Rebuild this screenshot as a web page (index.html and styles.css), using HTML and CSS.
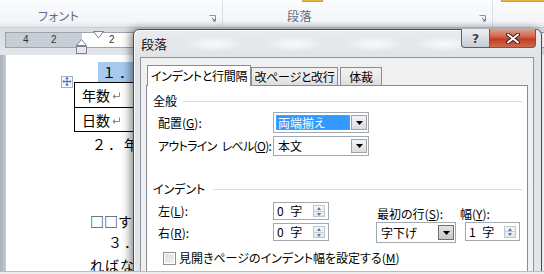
FILE: index.html
```html
<!DOCTYPE html>
<html lang="ja">
<head>
<meta charset="utf-8">
<title>段落</title>
<link rel="stylesheet" href="styles.css">
</head>
<body>
<div class="app">
  <div class="ribbon">
    <div class="group g1">
      <span class="glabel">フォント</span>
      <span class="launcher"><svg width="7" height="7" viewBox="0 0 7 7"><path d="M0.5 0.5H6.5V6.5" fill="none" stroke="#8c96a3"/><path d="M3 3L6 6M4 6H6V4" fill="none" stroke="#6c7683"/></svg></span>
    </div>
    <div class="group g2">
      <span class="goldbar gb1"></span>
      <span class="glabel">段落</span>
      <span class="launcher"><svg width="7" height="7" viewBox="0 0 7 7"><path d="M0.5 0.5H6.5V6.5" fill="none" stroke="#8c96a3"/><path d="M3 3L6 6M4 6H6V4" fill="none" stroke="#6c7683"/></svg></span>
    </div>
    <div class="group g3"><span class="goldbar gb2"></span></div>
  </div>

  <div class="rulerbar">
    <div class="ruler">
      <div class="rmargin"><span class="rnum n4">4</span><span class="rnum n2">2</span></div>
      <div class="rtext"><span class="rnum n2b">2</span></div>
      <svg class="firstind" width="11" height="8" viewBox="0 0 11 8"><path d="M0.5 0.5H10.5L5.5 7Z" fill="#fff" stroke="#7a8390"/></svg>
      <svg class="hangind" width="11" height="15" viewBox="0 0 11 15"><path d="M5.5 0.5L10.5 6.5H0.5Z" fill="#fff" stroke="#7a8390"/><rect x="0.5" y="7.5" width="10" height="7" fill="#e8e8e8" stroke="#7a8390"/></svg>
    </div>
  </div>

  <div class="docarea">
    <div class="vruler"></div>
    <div class="page">
      <div class="line l1">
        <span class="handle"><svg width="11" height="11" viewBox="0 0 11 11"><path d="M5.5 1V10M1 5.5H10" stroke="#3c6fc8" stroke-width="1.2"/><path d="M5.5 0.5L3.5 2.5H7.5ZM5.5 10.5L3.5 8.5H7.5ZM0.5 5.5L2.5 3.5V7.5ZM10.5 5.5L8.5 3.5V7.5Z" fill="#3c6fc8"/></svg></span>
        <span class="sel">１．</span>
      </div>
      <div class="tbl">
        <div class="trow"><span>年数</span><svg class="pm" width="9" height="8" viewBox="0 0 9 8"><path d="M7.5 0.5V4.5H1.5" fill="none" stroke="#888"/><path d="M0.5 4.5L3 2V7Z" fill="#888"/></svg></div>
        <div class="trow"><span>日数</span><svg class="pm" width="9" height="8" viewBox="0 0 9 8"><path d="M7.5 0.5V4.5H1.5" fill="none" stroke="#888"/><path d="M0.5 4.5L3 2V7Z" fill="#888"/></svg></div>
      </div>
      <div class="line l2">２．年</div>
      <div class="line l3">□□す</div>
      <div class="line l4">３．</div>
      <div class="line l5">ればな</div>
    </div>
  </div>

  <div class="dialog">
    <div class="titlebar">
      <span class="title">段落</span>
      <div class="capbtns">
        <span class="cap help">?</span>
        <span class="cap close"><svg width="14" height="11" viewBox="0 0 14 11"><path d="M2 1.5L12 9.5M12 1.5L2 9.5" stroke="#3a2020" stroke-width="4" stroke-linecap="round"/><path d="M2 1.5L12 9.5M12 1.5L2 9.5" stroke="#fff" stroke-width="2" stroke-linecap="round"/></svg></span>
      </div>
    </div>
    <div class="client">
      <div class="tabs">
        <span class="tab active">インデントと行間隔</span>
        <span class="tab t2">改ページと改行</span>
        <span class="tab t3">体裁</span>
      </div>
      <div class="panel">
        <div class="hdr h1"><span>全般</span><i></i></div>
        <div class="frow r1">
          <span class="lbl">配置(<u>G</u>):</span>
          <div class="combo c1"><span class="val hi">両端揃え</span><span class="ddbtn"><svg width="7" height="4" viewBox="0 0 7 4"><path d="M0 0H7L3.5 4Z" fill="#000"/></svg></span></div>
        </div>
        <div class="frow r2">
          <span class="lbl">アウトライン レベル(<u>O</u>):</span>
          <div class="combo c2"><span class="val">本文</span><span class="ddbtn"><svg width="7" height="4" viewBox="0 0 7 4"><path d="M0 0H7L3.5 4Z" fill="#000"/></svg></span></div>
        </div>
        <div class="hdr h2"><span>インデント</span><i></i></div>
        <div class="igrid">
          <span class="lbl ga">左(<u>L</u>):</span>
          <div class="spin sa"><span class="val">0 字</span><span class="spbtns"><b class="up"></b><b class="dn"></b></span></div>
          <span class="lbl gc">最初の行(<u>S</u>):</span>
          <span class="lbl gd">幅(<u>Y</u>):</span>
          <span class="lbl gb">右(<u>R</u>):</span>
          <div class="spin sb"><span class="val">0 字</span><span class="spbtns"><b class="up"></b><b class="dn"></b></span></div>
          <div class="combo c3"><span class="val">字下げ</span><span class="ddbtn dark"><svg width="7" height="4" viewBox="0 0 7 4"><path d="M0 0H7L3.5 4Z" fill="#000"/></svg></span></div>
          <div class="spin sd"><span class="val">1 字</span><span class="spbtns"><b class="up"></b><b class="dn"></b></span></div>
        </div>
        <div class="chk"><span class="box"></span><span>見開きページのインデント幅を設定する(<u>M</u>)</span></div>
        <div class="chk next"><span class="box"></span><span>1 行の文字数を指定時に右のインデント幅を自動調整する(<u>D</u>)</span></div>
      </div>
    </div>
  </div>

  <div class="hbar"></div>
</div>
</body>
</html>
```

FILE: styles.css
```css
* { box-sizing: border-box; }
html, body { margin: 0; padding: 0; }
body {
  width: 544px; height: 274px; overflow: hidden;
  font-family: "Noto Sans CJK JP", "Noto Sans", sans-serif;
  font-size: 12px; line-height: 1; color: #000; white-space: nowrap;
}
.app { position: relative; width: 544px; height: 274px; overflow: hidden; background: #fff; }

/* Ribbon */
.ribbon {
  height: 28px; display: flex;
  background: linear-gradient(#fbfcfd 0%, #f3f5f8 80%, #e3e7ec 100%);
  border-bottom: 1px solid #c9ced6;
}
.group { position: relative; height: 100%; border-right: 1px solid #dadfe6; display: flex; align-items: flex-end; }
.g1 { width: 223px; padding-left: 38px; }
.g2 { width: 270px; padding-left: 64px; }
.g3 { flex: 1; border-right: 0; }
.glabel { color: #5f6c80; font-size: 12px; font-feature-settings: "palt"; letter-spacing: 0.5px; margin-bottom: 5px; }
.launcher { position: absolute; right: 6px; bottom: 5px; width: 7px; height: 7px; display: flex; }
.goldbar { position: absolute; top: 0; height: 2px; background: #e3b543; border: 1px solid #c7a048; border-top: 0; }
.gb1 { left: 79px; width: 21px; }
.gb2 { left: 8px; width: 44px; }

/* Ruler */
.rulerbar {
  height: 27px; padding: 4px 0 0 5px;
  background: linear-gradient(#d9dde3, #e2e5ea);
}
.ruler {
  position: relative; height: 16px; width: 600px; display: flex;
  border: 1px solid #9ba3ae; border-right: 0;
}
.rmargin { width: 76px; background: #c8ced6; position: relative; }
.rtext { flex: 1; background: #fff; position: relative; }
.rnum { position: absolute; top: 2px; font-family: "Liberation Sans", sans-serif; font-size: 10px; color: #333; }
.n4 { left: 17px; }
.n2 { left: 45px; }
.n2b { left: 27px; }
.firstind { position: absolute; left: 87px; top: -2px; }
.hangind { position: absolute; left: 70px; top: 6px; }

/* Document */
.docarea { display: flex; height: 219px; }
.vruler { width: 6px; background: linear-gradient(to right, #a9b0b9, #c4c9d0); }
.page { flex: 1; background: #fff; display: flex; flex-direction: column; font-size: 14px; }
.line { height: 20px; display: flex; align-items: center; }
.l1 { margin-top: 7px; padding-left: 55px; }
.handle {
  width: 12px; height: 12px; border: 1px solid #a9b0ba; background: #f4f6f9;
  display: flex; align-items: center; justify-content: center; margin-top: 19px;
}
.sel { margin-left: 25px; background: #a8c9ee; height: 20px; padding: 0 0 0 4px; width: 45px; display: flex; align-items: center; letter-spacing: 3px; overflow: hidden; }
.tbl { margin-left: 68px; width: 90px; border: 1px solid #000; }
.trow { height: 24px; display: flex; align-items: center; padding-left: 7px; }
.trow + .trow { border-top: 1px solid #000; }
.pm { margin-left: 2px; margin-top: 2px; }
.l2 { margin-top: 2px; padding-left: 86px; letter-spacing: 2px; }
.l3 { margin-top: 58px; padding-left: 84px; }
.l4 { margin-top: 2px; padding-left: 102px; letter-spacing: 2px; }
.l5 { margin-top: 4px; padding-left: 84px; letter-spacing: 1px; }

/* Dialog */
.dialog {
  position: absolute; left: 133px; top: 29px; width: 409px; height: 260px;
  border: 1px solid #4a4f55; border-radius: 6px 6px 0 0;
  background:
    radial-gradient(ellipse 30px 8px at 80px 14px, rgba(255,255,255,0.8), transparent),
    radial-gradient(ellipse 30px 8px at 160px 14px, rgba(255,255,255,0.8), transparent),
    radial-gradient(ellipse 30px 8px at 240px 14px, rgba(255,255,255,0.8), transparent),
    radial-gradient(ellipse 30px 8px at 310px 14px, rgba(255,255,255,0.8), transparent),
    linear-gradient(#e9ebee, #dfe3e7 30px, #e2e5e9);
  box-shadow: -3px 0 8px rgba(0,0,0,0.45), inset 1px 1px 0 rgba(255,255,255,0.8);
  padding: 0 7px 0 6px;
}
.titlebar { position: relative; height: 27px; }
.title { position: absolute; left: 1px; top: 7px; font-size: 13px; color: #1a1a1a; }
.capbtns { position: absolute; right: -2px; top: -1px; display: flex; }
.cap { height: 19px; display: flex; align-items: center; justify-content: center; border: 1px solid #5a5f66; border-top: 0; }
.help {
  width: 28px; border-radius: 0 0 0 4px; border-right: 0;
  background: linear-gradient(#eef0f3, #d9dde2 50%, #c9ced5);
  font-family: "DejaVu Sans", sans-serif; font-weight: bold; font-size: 13px; color: #3b4148;
  text-shadow: 0 0 1px #fff, 0 0 2px #fff;
}
.close {
  width: 47px; border-radius: 0 0 4px 0;
  background: linear-gradient(#e0a090, #d2604c 45%, #c23b22 55%, #d06a50);
}
.client {
  height: 240px; background: #f0f0f0; border: 1px solid #8d949c;
  padding: 6px 5px 0 5px;
}
.tabs { height: 21px; display: flex; align-items: flex-end; padding-left: 1px; position: relative; z-index: 1; }
.tab {
  height: 18px; border: 1px solid #898c95; border-bottom: 0;
  display: flex; align-items: center; justify-content: center; font-feature-settings: "palt";
  background: linear-gradient(#f2f2f2, #ebebeb 50%, #dcdcdc);
  letter-spacing: -0.3px; overflow: hidden;
}
.tab.active { height: 21px; background: #fff; width: 104px; margin-bottom: -1px; }
.t2 { width: 87px; }
.t3 { width: 42px; margin-left: 2px; }
.panel {
  height: 210px; background: #fff; border: 1px solid #898c95; padding: 0 5px 0 6px;
  display: flex; flex-direction: column; font-feature-settings: "palt";
}
.hdr { height: 14px; display: flex; align-items: center; }
.hdr i { flex: 1; height: 1px; background: #d5dfe5; margin-left: 6px; }
.h1 { margin-top: 8px; }
.h2 { margin-top: 26px; }
.h2 i { margin-left: 8px; }
.frow { display: flex; align-items: center; padding-left: 5px; }
.r1 { margin-top: 4px; height: 21px; }
.r2 { margin-top: 3px; height: 20px; }
.lbl { width: 115px; flex: none; }
.r2 .lbl { letter-spacing: -0.7px; word-spacing: 3px; }
u { text-decoration: underline; text-underline-offset: 1px; }
.combo {
  width: 96px; height: 100%; border: 1px solid #a3a9b1; background: #fff;
  display: flex; align-items: center; padding: 2px 1px 2px 2px; gap: 1px;
}
.combo .val { flex: 1; height: 100%; display: flex; align-items: center; padding-left: 2px; }
.val.hi { background: #3399ff; color: #fff; outline: 1px dotted #d88a3a; outline-offset: -1px; }
.ddbtn {
  width: 16px; height: 100%; border: 1px solid #9ea3aa;
  background: linear-gradient(#f4f4f4, #dcdcdc);
  display: flex; align-items: center; justify-content: center; flex: none;
}
.ddbtn.dark { background: linear-gradient(#e2e2e2, #c8c8c8); border-color: #6e6e6e; }
.igrid {
  margin-top: 6px; display: grid;
  grid-template-columns: 115px 56px 47px 80px 9px 55px;
  grid-template-rows: 20px 21px; padding-left: 5px;
}
.ga { grid-column: 1; grid-row: 1; align-self: center; margin-top: -2px; }
.sa { grid-column: 2; grid-row: 1; height: 18px; }
.gc { grid-column: 4; grid-row: 1; align-self: center; padding-left: 1px; margin-top: 4px; }
.gd { grid-column: 6; grid-row: 1; align-self: center; margin-left: -5px; margin-top: 4px; }
.gb { grid-column: 1; grid-row: 2; align-self: center; }
.sb { grid-column: 2; grid-row: 2; height: 18px; margin-top: 1px; }
.c3 { grid-column: 4; grid-row: 2; width: 80px; height: 21px; }
.sd { grid-column: 6; grid-row: 2; height: 19px; }
.spin {
  border: 1px solid #a3a9b1; background: #fff; display: flex; align-items: center;
  padding: 0 3px 0 3px;
}
.spin .val { flex: 1; word-spacing: 4px; }
.spbtns {
  width: 12px; height: 12px; display: flex; flex-direction: column;
  border: 1px solid #c0c6ce; background: linear-gradient(#f6f7f9, #e3e7ec);
}
.spbtns b { flex: 1; position: relative; }
.spbtns b::after {
  content: ""; position: absolute; left: 3px; top: 1px;
  border-left: 2px solid transparent; border-right: 2px solid transparent;
}
.spbtns .up::after { border-bottom: 3px solid #5a78a8; }
.spbtns .dn { border-top: 1px solid #c8ced6; }
.spbtns .dn::after { border-top: 3px solid #5a78a8; top: 1px; }
.chk { display: flex; align-items: center; gap: 3px; padding-left: 10px; height: 14px; margin-top: 8px; }
.chk .box {
  width: 13px; height: 13px; border: 1px solid #8e9297; flex: none;
  background: linear-gradient(135deg, #dcdcdc, #f4f4f4);
  box-shadow: inset 0 0 0 1px #fff;
}
.chk.next { margin-top: 6px; }

.hbar {
  position: absolute; left: 0; right: 0; top: 271px; height: 3px;
  background: #ececec; border-top: 1px solid #b9bdc2;
}
```
